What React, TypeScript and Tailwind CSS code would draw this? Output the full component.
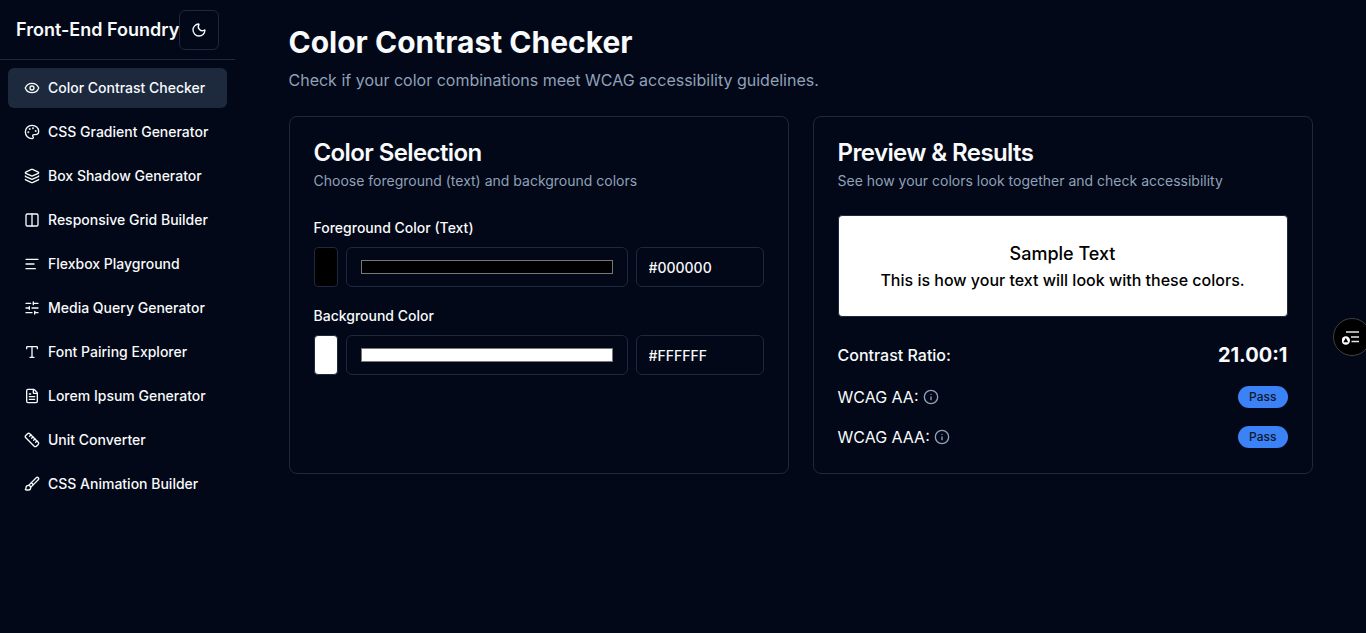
import { useState } from 'react'
import {
  AlignLeft,
  Brush,
  Columns2,
  Eye,
  FileText,
  Info,
  Layers,
  Moon,
  Palette,
  Ruler,
  SlidersHorizontal,
  Type,
} from 'lucide-react'

const tools = [
  { name: 'Color Contrast Checker', icon: Eye },
  { name: 'CSS Gradient Generator', icon: Palette },
  { name: 'Box Shadow Generator', icon: Layers },
  { name: 'Responsive Grid Builder', icon: Columns2 },
  { name: 'Flexbox Playground', icon: AlignLeft },
  { name: 'Media Query Generator', icon: SlidersHorizontal },
  { name: 'Font Pairing Explorer', icon: Type },
  { name: 'Lorem Ipsum Generator', icon: FileText },
  { name: 'Unit Converter', icon: Ruler },
  { name: 'CSS Animation Builder', icon: Brush },
]

function luminance(hex: string) {
  const [r, g, b] = [1, 3, 5].map((i) => {
    const c = parseInt(hex.slice(i, i + 2), 16) / 255
    return c <= 0.03928 ? c / 12.92 : ((c + 0.055) / 1.055) ** 2.4
  })
  return 0.2126 * r + 0.7152 * g + 0.0722 * b
}

function contrast(a: string, b: string) {
  const l1 = luminance(a)
  const l2 = luminance(b)
  return (Math.max(l1, l2) + 0.05) / (Math.min(l1, l2) + 0.05)
}

function Sidebar() {
  return (
    <aside className="w-[235px] shrink-0">
      <div className="flex h-15 items-center justify-between border-b border-slate-800 px-4">
        <span className="text-lg font-semibold whitespace-nowrap">Front-End Foundry</span>
        <button
          type="button"
          aria-label="Toggle theme"
          className="flex size-10 shrink-0 items-center justify-center rounded-md border border-slate-800"
        >
          <Moon className="size-4" />
        </button>
      </div>
      <nav className="flex flex-col gap-1 p-2">
        {tools.map(({ name, icon: Icon }, i) => (
          <a
            key={name}
            href="#"
            className={`flex h-10 items-center gap-2 rounded-md px-4 text-sm font-medium whitespace-nowrap ${
              i === 0 ? 'bg-slate-800' : ''
            }`}
          >
            <Icon className="size-4 shrink-0" />
            {name}
          </a>
        ))}
      </nav>
    </aside>
  )
}

function Card({ title, description, children }: { title: string; description: string; children: React.ReactNode }) {
  return (
    <section className="rounded-lg border border-slate-800 p-6">
      <h2 className="text-2xl leading-none font-semibold tracking-tight">{title}</h2>
      <p className="mt-1.5 text-sm text-slate-400">{description}</p>
      <div className="mt-6">{children}</div>
    </section>
  )
}

function ColorField({
  id,
  label,
  value,
  onChange,
}: {
  id: string
  label: string
  value: string
  onChange: (value: string) => void
}) {
  return (
    <div>
      <div className="mb-2">
        <label htmlFor={id} className="text-sm leading-none font-medium">
          {label}
        </label>
      </div>
      <div className="flex gap-2">
        <div className="h-10 w-6 shrink-0 rounded border border-slate-800" style={{ backgroundColor: value }} />
        <input
          id={id}
          type="color"
          value={value}
          onChange={(e) => onChange(e.target.value)}
          className="h-10 min-w-0 flex-1 rounded-md border border-slate-800 px-3 py-2"
        />
        <input
          type="text"
          aria-label={`${label} hex value`}
          value={value.toUpperCase()}
          onChange={(e) => onChange(e.target.value)}
          className="h-10 w-32 rounded-md border border-slate-800 px-3 py-2 text-sm font-medium"
        />
      </div>
    </div>
  )
}

function WcagRow({ level, pass }: { level: string; pass: boolean }) {
  return (
    <div className="flex h-6 items-center justify-between">
      <span className="flex items-center gap-1">
        {level}:
        <Info className="size-4 text-slate-400" />
      </span>
      <span
        className={`rounded-full border border-transparent px-2.5 py-0.5 text-xs font-medium ${
          pass ? 'bg-[#3b82f6] text-slate-900' : 'bg-red-900 text-slate-50'
        }`}
      >
        {pass ? 'Pass' : 'Fail'}
      </span>
    </div>
  )
}

function FloatingWidget() {
  return (
    <button
      type="button"
      aria-label="Open reader"
      className="fixed top-[318px] -right-[5px] flex size-[38px] items-center justify-center rounded-full border border-neutral-700 bg-black"
    >
      <svg viewBox="0 0 20 16" className="h-4 w-5" fill="none">
        <path d="M4 3h13M9 8h8M9.5 12.5H17" stroke="#e5e5e5" strokeWidth="1.6" />
        <circle cx="3.8" cy="11.5" r="4.2" fill="#fff" />
        <path d="M3.8 8.8 6.2 13.2H1.4Z" fill="#000" />
      </svg>
    </button>
  )
}

export default function App() {
  const [foreground, setForeground] = useState('#000000')
  const [background, setBackground] = useState('#ffffff')
  const ratio = contrast(foreground, background)

  return (
    <div className="flex min-h-screen bg-[#020817] font-['Inter',sans-serif] text-slate-50">
      <Sidebar />
      <main className="min-w-0 flex-1 p-6">
        <div className="mx-auto max-w-5xl">
          <h1 className="text-3xl font-bold">Color Contrast Checker</h1>
          <p className="mt-2 text-slate-400">Check if your color combinations meet WCAG accessibility guidelines.</p>

          <div className="mt-6 grid gap-6 md:grid-cols-2">
            <Card title="Color Selection" description="Choose foreground (text) and background colors">
              <div className="space-y-4">
                <ColorField
                  id="foreground"
                  label="Foreground Color (Text)"
                  value={foreground}
                  onChange={setForeground}
                />
                <ColorField id="background" label="Background Color" value={background} onChange={setBackground} />
              </div>
            </Card>

            <Card title="Preview & Results" description="See how your colors look together and check accessibility">
              <div
                className="rounded border border-slate-800 p-6 text-center font-medium"
                style={{ color: foreground, backgroundColor: background }}
              >
                <p className="text-lg">Sample Text</p>
                <p>This is how your text will look with these colors.</p>
              </div>
              <div className="mt-6 space-y-4">
                <div className="flex items-center justify-between">
                  <span className="font-medium">Contrast Ratio:</span>
                  <span className="text-xl font-bold">{ratio.toFixed(2)}:1</span>
                </div>
                <WcagRow level="WCAG AA" pass={ratio >= 4.5} />
                <WcagRow level="WCAG AAA" pass={ratio >= 7} />
              </div>
            </Card>
          </div>
        </div>
      </main>
      <FloatingWidget />
    </div>
  )
}
